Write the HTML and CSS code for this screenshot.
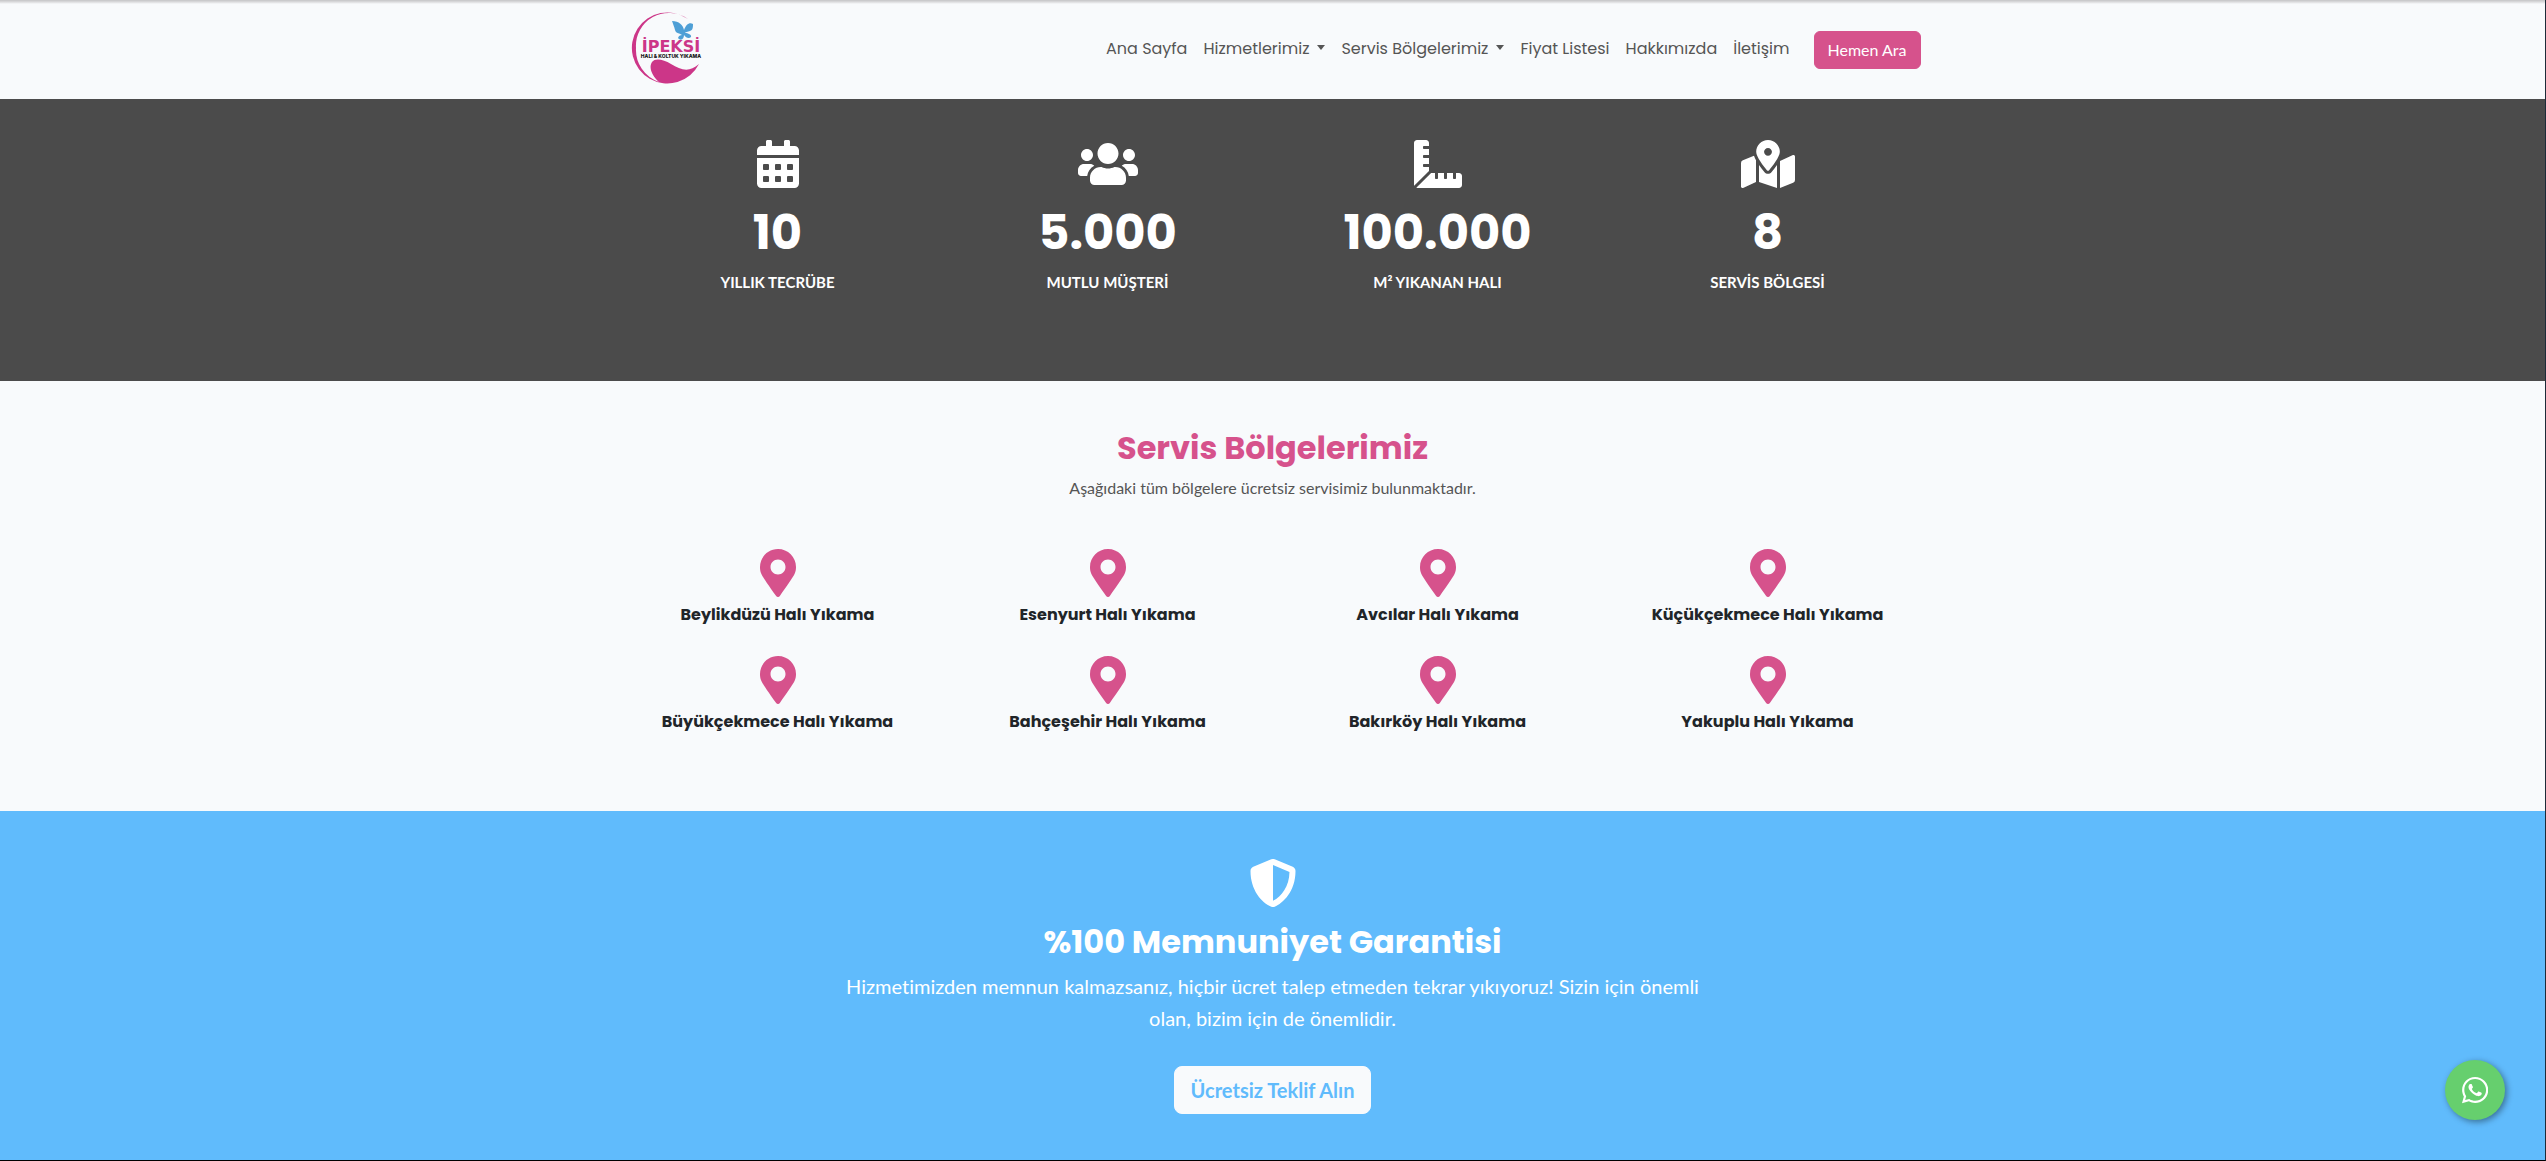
FILE: index.html
```html
<!DOCTYPE html>
<html lang="tr">
<head>
    <meta charset="UTF-8">
    <meta name="viewport" content="width=device-width, initial-scale=1.0">
    <title>İpeksi Halı &amp; Koltuk Yıkama</title>
    <link rel="stylesheet" href="styles.css">
</head>
<body>
    <!-- icons used more than once -->
    <svg class="sprite" aria-hidden="true">
        <symbol id="pin" viewBox="0 0 384 512">
            <path d="M172.268 501.67C26.97 291.031 0 269.413 0 192 0 85.961 85.961 0 192 0s192 85.961 192 192c0 77.413-26.97 99.031-172.268 309.67-9.535 13.774-29.93 13.773-39.464 0zM192 272c44.183 0 80-35.817 80-80s-35.817-80-80-80-80 35.817-80 80 35.817 80 80 80z"/>
        </symbol>
    </svg>

    <header class="site-header">
        <nav class="container navbar">
            <a class="brand" href="#" aria-label="İpeksi">
                <svg class="logo" viewBox="-2 3 80 80">
                    <path class="logo-pink" d="M61 12A35.500 35.500 0 1 0 72 57C62 66 54 63 44 57C36 52 28 51 25 55C21 61 26 70 32 75A34 34 0 0 1 9 41A33 33 0 0 1 61 12z"/>
                    <path class="logo-blue" d="M55 28C53 26 49 27 48 23C47 19 46 17 45 14C52 14 56 18 57 23C59 18 62 15 66 17C66 20 66 23 63 24C61 25 58 25 58 26C61 26 65 28 64 30C62 32 59 31 57 28C57 31 55 34 52 32C50 31 52 28 55 28z"/>
                    <text class="logo-name" x="44" y="45">İPEKSİ</text>
                    <text class="logo-sub" x="44" y="51">HALI &amp; KOLTUK YIKAMA</text>
                </svg>
            </a>
            <ul class="nav-links">
                <li><a href="#">Ana Sayfa</a></li>
                <li><a class="dropdown" href="#">Hizmetlerimiz</a></li>
                <li><a class="dropdown" href="#">Servis Bölgelerimiz</a></li>
                <li><a href="#">Fiyat Listesi</a></li>
                <li><a href="#">Hakkımızda</a></li>
                <li><a href="#">İletişim</a></li>
            </ul>
            <a class="btn btn-call" href="#">Hemen Ara</a>
        </nav>
    </header>

    <section class="stats">
        <div class="container grid">
            <div class="stat">
                <svg class="icon" viewBox="0 0 448 512"><path d="M0 464c0 26.500 21.500 48 48 48h352c26.500 0 48-21.500 48-48V192H0v272zm320-196c0-6.600 5.400-12 12-12h40c6.600 0 12 5.400 12 12v40c0 6.600-5.400 12-12 12h-40c-6.600 0-12-5.400-12-12v-40zm0 128c0-6.600 5.400-12 12-12h40c6.600 0 12 5.400 12 12v40c0 6.600-5.400 12-12 12h-40c-6.600 0-12-5.400-12-12v-40zM192 268c0-6.600 5.400-12 12-12h40c6.600 0 12 5.400 12 12v40c0 6.600-5.400 12-12 12h-40c-6.600 0-12-5.400-12-12v-40zm0 128c0-6.600 5.400-12 12-12h40c6.600 0 12 5.400 12 12v40c0 6.600-5.400 12-12 12h-40c-6.600 0-12-5.400-12-12v-40zM64 268c0-6.600 5.400-12 12-12h40c6.600 0 12 5.400 12 12v40c0 6.600-5.400 12-12 12H76c-6.600 0-12-5.400-12-12v-40zm0 128c0-6.600 5.400-12 12-12h40c6.600 0 12 5.400 12 12v40c0 6.600-5.400 12-12 12H76c-6.600 0-12-5.400-12-12v-40zM400 64h-48V16c0-8.800-7.200-16-16-16h-32c-8.800 0-16 7.200-16 16v48H160V16c0-8.800-7.200-16-16-16h-32c-8.800 0-16 7.200-16 16v48H48C21.500 64 0 85.500 0 112v48h448v-48c0-26.500-21.500-48-48-48z"/></svg>
                <h2>10</h2>
                <p>YILLIK TECRÜBE</p>
            </div>
            <div class="stat">
                <svg class="icon" viewBox="0 0 640 512"><path d="M96 224c35.300 0 64-28.700 64-64s-28.700-64-64-64-64 28.700-64 64 28.700 64 64 64zm448 0c35.300 0 64-28.700 64-64s-28.700-64-64-64-64 28.700-64 64 28.700 64 64 64zm32 32h-64c-17.600 0-33.500 7.100-45.100 18.600 40.300 22.100 68.900 62 75.100 109.400h66c17.700 0 32-14.300 32-32v-32c0-35.300-28.700-64-64-64zm-256 0c61.900 0 112-50.100 112-112S381.900 32 320 32 208 82.100 208 144s50.100 112 112 112zm76.800 32h-8.300c-20.800 10-43.900 16-68.500 16s-47.600-6-68.500-16h-8.300C179.600 288 128 339.600 128 403.200V432c0 26.500 21.500 48 48 48h288c26.500 0 48-21.500 48-48v-28.800c0-63.600-51.600-115.200-115.200-115.200zm-223.700-13.400C161.500 263.100 145.600 256 128 256H64c-35.300 0-64 28.700-64 64v32c0 17.700 14.300 32 32 32h65.900c6.300-47.400 34.900-87.300 75.200-109.400z"/></svg>
                <h2>5.000</h2>
                <p>MUTLU MÜŞTERİ</p>
            </div>
            <div class="stat">
                <svg class="icon" viewBox="0 0 512 512"><path d="M160 288h-56c-4.420 0-8-3.580-8-8v-16c0-4.420 3.580-8 8-8h56v-64h-56c-4.420 0-8-3.580-8-8v-16c0-4.420 3.580-8 8-8h56V96h-56c-4.420 0-8-3.580-8-8V72c0-4.420 3.580-8 8-8h56V32c0-17.670-14.330-32-32-32H32C14.330 0 0 14.330 0 32v448c0 2.770.910 5.240 1.570 7.800L160 329.380V288zm320 64h-32v56c0 4.420-3.580 8-8 8h-16c-4.420 0-8-3.580-8-8v-56h-64v56c0 4.420-3.580 8-8 8h-16c-4.420 0-8-3.580-8-8v-56h-64v56c0 4.420-3.580 8-8 8h-16c-4.420 0-8-3.580-8-8v-56h-41.370L24.200 510.430c2.560.660 5.040 1.570 7.800 1.570h448c17.670 0 32-14.330 32-32v-96c0-17.670-14.330-32-32-32z"/></svg>
                <h2>100.000</h2>
                <p>M² YIKANAN HALI</p>
            </div>
            <div class="stat">
                <svg class="icon" viewBox="0 0 576 512"><path d="M288 0c-69.590 0-126 56.410-126 126 0 56.260 82.350 158.800 113.900 196.020 6.390 7.540 17.820 7.540 24.200 0C331.650 284.800 414 182.260 414 126 414 56.410 357.590 0 288 0zm0 168c-23.200 0-42-18.800-42-42s18.800-42 42-42 42 18.800 42 42-18.800 42-42 42zM20.120 215.950A32.006 32.006 0 0 0 0 245.660v250.320c0 11.320 11.430 19.060 21.940 14.860L160 448V214.920c-8.840-15.980-16.070-31.540-21.250-46.420L20.120 215.950zM288 359.670c-14.070 0-27.380-6.180-36.510-16.960-19.660-23.200-40.570-49.620-59.490-76.720v182l192 64V266c-18.920 27.090-39.820 53.520-59.490 76.720-9.130 10.770-22.440 16.950-36.510 16.950zm266.060-198.510L416 224v288l139.880-55.950A31.996 31.996 0 0 0 576 426.340V176.020c0-11.320-11.430-19.060-21.940-14.860z"/></svg>
                <h2>8</h2>
                <p>SERVİS BÖLGESİ</p>
            </div>
        </div>
    </section>

    <section class="regions">
        <h2>Servis Bölgelerimiz</h2>
        <p>Aşağıdaki tüm bölgelere ücretsiz servisimiz bulunmaktadır.</p>
        <div class="container grid region-grid">
            <a class="region" href="#"><svg class="icon"><use href="#pin"/></svg>Beylikdüzü Halı Yıkama</a>
            <a class="region" href="#"><svg class="icon"><use href="#pin"/></svg>Esenyurt Halı Yıkama</a>
            <a class="region" href="#"><svg class="icon"><use href="#pin"/></svg>Avcılar Halı Yıkama</a>
            <a class="region" href="#"><svg class="icon"><use href="#pin"/></svg>Küçükçekmece Halı Yıkama</a>
            <a class="region" href="#"><svg class="icon"><use href="#pin"/></svg>Büyükçekmece Halı Yıkama</a>
            <a class="region" href="#"><svg class="icon"><use href="#pin"/></svg>Bahçeşehir Halı Yıkama</a>
            <a class="region" href="#"><svg class="icon"><use href="#pin"/></svg>Bakırköy Halı Yıkama</a>
            <a class="region" href="#"><svg class="icon"><use href="#pin"/></svg>Yakuplu Halı Yıkama</a>
        </div>
    </section>

    <section class="guarantee">
        <svg class="icon" viewBox="0 0 512 512"><path d="M466.500 83.700l-192-80a48.150 48.150 0 0 0-36.900 0l-192 80C27.700 91.100 16 108.600 16 128c0 198.500 114.500 335.700 221.500 380.300 11.800 4.900 25.100 4.900 36.900 0C360.100 472.600 496 349.300 496 128c0-19.400-11.700-36.900-29.500-44.300zM256.100 446.300l-.1-381 175.900 73.300c-3.300 151.400-82.100 261.100-175.800 307.700z"/></svg>
        <h2>%100 Memnuniyet Garantisi</h2>
        <p>Hizmetimizden memnun kalmazsanız, hiçbir ücret talep etmeden tekrar yıkıyoruz! Sizin için önemli olan, bizim için de önemlidir.</p>
        <a class="btn btn-offer" href="#">Ücretsiz Teklif Alın</a>
    </section>

    <a class="whatsapp" href="#" aria-label="WhatsApp">
        <svg viewBox="0 0 448 512"><path d="M380.900 97.100C339 55.100 283.200 32 223.900 32c-122.400 0-222 99.600-222 222 0 39.100 10.200 77.300 29.600 111L0 480l117.700-30.900c32.400 17.700 68.900 27 106.100 27h.1c122.300 0 224.100-99.600 224.100-222 0-59.300-25.200-115-67.100-157zm-157 341.600c-33.200 0-65.700-8.900-94-25.700l-6.700-4-69.800 18.300L72 359.200l-4.400-7c-18.500-29.400-28.200-63.300-28.200-98.200 0-101.700 82.800-184.500 184.600-184.500 49.300 0 95.600 19.200 130.400 54.100 34.800 34.900 56.200 81.200 56.100 130.500 0 101.800-84.900 184.600-186.600 184.600zm101.200-138.200c-5.500-2.800-32.800-16.200-37.900-18-5.100-1.900-8.800-2.800-12.500 2.800-3.700 5.600-14.300 18-17.600 21.800-3.200 3.700-6.500 4.200-12 1.400-32.600-16.300-54-29.100-75.500-66-5.700-9.800 5.700-9.100 16.300-30.300 1.800-3.700.9-6.900-.5-9.700-1.400-2.800-12.500-30.100-17.100-41.200-4.500-10.800-9.100-9.300-12.500-9.500-3.200-.2-6.900-.2-10.600-.2-3.700 0-9.700 1.400-14.800 6.900-5.100 5.600-19.400 19-19.400 46.300 0 27.300 19.900 53.700 22.600 57.400 2.800 3.700 39.100 59.700 94.800 83.800 35.200 15.200 49 16.500 66.600 13.900 10.700-1.600 32.800-13.400 37.400-26.400 4.600-13 4.600-24.100 3.200-26.400-1.300-2.500-5-3.900-10.500-6.600z"/></svg>
    </a>
</body>
</html>
```
FILE: styles.css
```css
* {
    box-sizing: border-box;
}
body {
    margin: 0;
    min-height: 100vh;
    font-family: Lato, sans-serif;
    font-size: 16px;
    line-height: 24px;
    font-variant-ligatures: none;
    color: #212529;
    background-color: #60bbfc;
    border-right: 1px solid #1d2b38;
    border-bottom: 1px solid #000;
}
h2, p, ul {
    margin: 0;
    padding: 0;
}
a {
    text-decoration: none;
}
.sprite {
    display: none;
}
.container {
    width: 100%;
    max-width: 1320px;
    margin: 0 auto;
    padding: 0 12px;
}
.grid {
    display: grid;
    grid-template-columns: repeat(4, 1fr);
    column-gap: 24px;
}
.icon {
    display: block;
    height: 48px;
    margin: 0 auto;
    fill: currentColor;
}

/* Header */
.site-header {
    background: linear-gradient(#c4c4c6, #dcdcde 2px, #f8fafc 4px);
}
.navbar {
    display: flex;
    align-items: center;
    height: 99px;
}
.brand {
    margin-right: auto;
}
.logo {
    display: block;
    width: 80px;
    height: 80px;
}
.logo-pink {
    fill: #cc3688;
}
.logo-blue {
    fill: #4e9fd6;
}
.logo-name {
    font-family: "DejaVu Sans", sans-serif;
    font-size: 16px;
    font-weight: 700;
    text-anchor: middle;
    fill: #cc3688;
}
.logo-sub {
    font-family: Inter, sans-serif;
    font-size: 5px;
    font-weight: 800;
    text-anchor: middle;
    fill: #111;
}
.nav-links {
    display: flex;
    gap: 16px;
    margin-right: 24px;
    padding-bottom: 2px;
    list-style: none;
}
.nav-links a {
    font-family: Poppins, Inter, sans-serif;
    color: #555;
}
.dropdown::after {
    content: "";
    display: inline-block;
    margin-left: 8px;
    vertical-align: 4px;
    border-top: 5px solid;
    border-left: 4px solid transparent;
    border-right: 4px solid transparent;
}
.btn {
    display: inline-block;
    border: 1px solid transparent;
    border-radius: 6px;
}
.btn-call {
    padding: 6px 13px;
    color: #fff;
    background-color: #d6528c;
    border-color: #d6528c;
}

/* Counters */
.stats {
    padding: 41px 0 87px;
    text-align: center;
    color: #fff;
    background-color: #4b4b4b;
}
.stat h2 {
    margin: 16px 0 8px;
    font-family: Poppins, Inter, sans-serif;
    font-size: 48px;
    line-height: 58px;
}
.stat p {
    font-size: 15px;
    font-weight: 700;
}

/* Service regions */
.regions {
    padding: 48px 0 80px;
    text-align: center;
    background-color: #f8fafc;
}
.regions h2 {
    margin-bottom: 9px;
    font-family: Poppins, Inter, sans-serif;
    font-size: 32px;
    line-height: 38px;
    color: #d6528c;
}
.regions p {
    color: #555;
}
.region-grid {
    row-gap: 32px;
    margin-top: 49px;
}
.region {
    font-family: Poppins, Inter, sans-serif;
    font-weight: 700;
    line-height: 19px;
    color: #212529;
}
.region .icon {
    width: 36px;
    margin-bottom: 8px;
    color: #d6528c;
}

/* Guarantee */
.guarantee {
    padding: 48px 12px 46px;
    text-align: center;
    color: #fff;
}
.guarantee h2 {
    margin: 16px 0 9px;
    font-family: Poppins, Inter, sans-serif;
    font-size: 32px;
    line-height: 38px;
}
.guarantee p {
    max-width: 856px;
    margin: 0 auto 32px;
    font-size: 20px;
    line-height: 32px;
}
.btn-offer {
    padding: 8px 16px;
    font-size: 20px;
    font-weight: 700;
    line-height: 30px;
    border-radius: 8px;
    color: #60bbfc;
    background-color: #f8fafc;
    border-color: #f8fafc;
}

/* Floating WhatsApp button */
.whatsapp {
    position: fixed;
    right: 41px;
    bottom: 41px;
    display: flex;
    align-items: center;
    justify-content: center;
    width: 60px;
    height: 60px;
    border-radius: 50%;
    background-color: #66cf6e;
    box-shadow: 2px 2px 6px rgba(0, 0, 0, 0.4);
}
.whatsapp svg {
    height: 30px;
    fill: #fff;
}
```
